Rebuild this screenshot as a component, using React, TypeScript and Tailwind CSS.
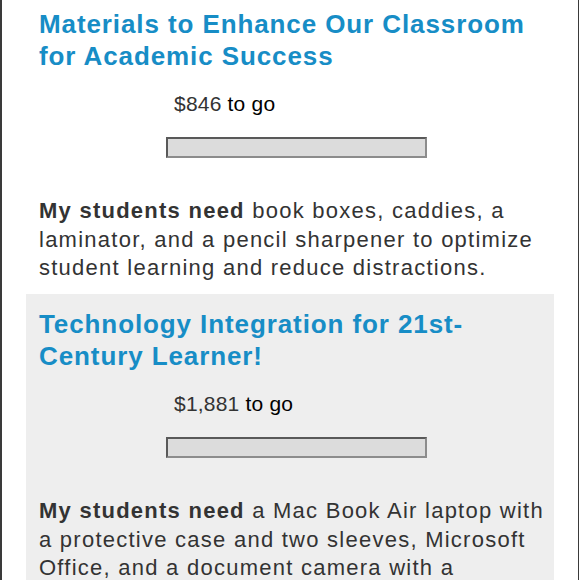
import React from "react";

type Project = {
  title: string;
  amount: string;
  need: string;
  shaded?: boolean;
};

const projects: Project[] = [
  {
    title: "Materials to Enhance Our Classroom for Academic Success",
    amount: "$846",
    need: "book boxes, caddies, a laminator, and a pencil sharpener to optimize student learning and reduce distractions.",
  },
  {
    title: "Technology Integration for 21st-Century Learner!",
    amount: "$1,881",
    need: "a Mac Book Air laptop with a protective case and two sleeves, Microsoft Office, and a document camera with a microphone to engage every learner.",
    shaded: true,
  },
];

function ProjectCard({ project }: { project: Project }) {
  return (
    <div
      className={`h-[300px] shrink-0 overflow-hidden pl-[13px] pr-[6px] pt-[14px] ${
        project.shaded ? "bg-[#eeeeee]" : "bg-white"
      }`}
    >
      <h2 className="text-[26px] leading-[32px] font-bold tracking-[0.9px] text-[#178dc6]">
        {project.title}
      </h2>
      <p className="mt-[18px] ml-[135px] text-[21px] leading-[28px] tracking-[0.2px] text-black">
        <span className="text-[#333333]">{project.amount}</span> to go
      </p>
      <div className="mt-[19px] ml-[127px] h-[21px] w-[261px] border-2 border-t-[#595959] border-l-[#595959] border-r-[#8c8c8c] border-b-[#8c8c8c] bg-[#dcdcdc]" />
      <p className="mt-[39px] text-[22px] leading-[28.5px] tracking-[1.25px] text-[#333333]">
        <span className="font-bold">My students need</span> {project.need}
      </p>
    </div>
  );
}

export default function App() {
  return (
    <div
      className="h-[580px] w-[579px] overflow-hidden border-l-2 border-r border-[#3a3a3a] bg-white px-6"
      style={{ fontFamily: '"Liberation Sans", Arial, sans-serif' }}
    >
      <div className="mt-[-6px] flex flex-col">
        {projects.map((p) => (
          <ProjectCard key={p.title} project={p} />
        ))}
      </div>
    </div>
  );
}
